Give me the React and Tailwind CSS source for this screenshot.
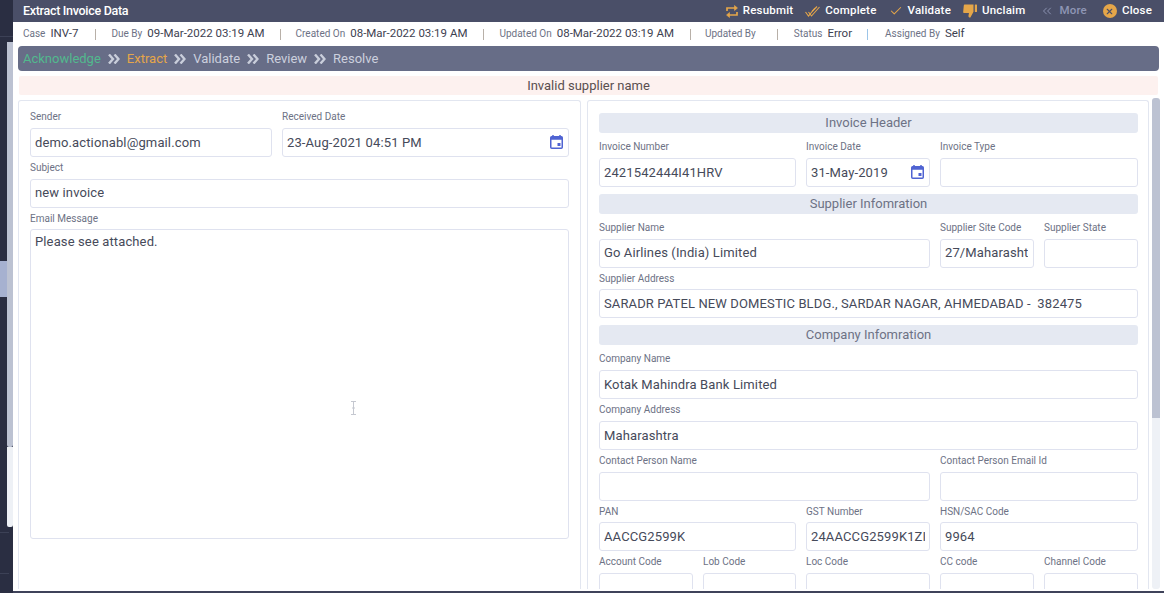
import { Check, ChevronsLeft, X } from 'lucide-react';

const DateIcon = () => (
  <svg width="13" height="14" viewBox="0 0 13 14" className="shrink-0 mr-[1px]">
    <path d="M3 0v2M10 0v2" stroke="#4f63d2" strokeWidth="1.5" />
    <rect x="0.75" y="1.75" width="11.5" height="11.5" rx="1" fill="none" stroke="#4f63d2" strokeWidth="1.5" />
    <rect x="0.75" y="1.75" width="11.5" height="3" fill="#4f63d2" />
    <rect x="7.5" y="8" width="3" height="3" fill="#4f63d2" />
  </svg>
);

const ResubmitIcon = () => (
  <svg width="12" height="13" viewBox="0 0 12 13" fill="none" stroke="#e5a649" strokeWidth="1.7">
    <path d="M1 6V3h9" />
    <path d="M8.5 0.5 11.5 3 8.5 5.5z" fill="#e5a649" strokeWidth="0.6" />
    <path d="M11 7v3H2" />
    <path d="M3.5 7.5 0.5 10 3.5 12.5z" fill="#e5a649" strokeWidth="0.6" />
  </svg>
);

const DoubleCheckIcon = () => (
  <svg width="15" height="11" viewBox="0 0 15 11" fill="none" stroke="#e5a649" strokeWidth="1.1">
    <path d="M0.5 6 3.5 10 10 2" />
    <path d="M3.5 6 6.5 10 14.5 1" />
    <path d="M7 5.5 12 0.5" />
  </svg>
);

const ThumbIcon = () => (
  <svg width="14" height="14" viewBox="0 0 14 14" fill="#e5a649">
    <path d="M1.6 0.5H10.5V7.8L7.4 13.5C6 13.7 5.2 12.8 5.5 11.5L6 9H1.5C0.5 9 0 8.3 0.2 7.4L0.8 1.4C0.9 0.8 1.1 0.5 1.6 0.5Z" />
    <rect x="11.8" y="0.5" width="2.2" height="7.5" rx="0.5" />
  </svg>
);

const Field = ({ label, value, icon, className = '' }) => (
  <div className={`min-w-0 ${className}`}>
    <div className="h-[21.75px] pt-[5px] text-[10px] leading-[12px] text-[#6d7285] whitespace-nowrap">{label}</div>
    <div className="h-[29px] border border-[#dfe2ef] rounded-[3px] bg-white flex items-center justify-between px-[4px] text-[13px] text-[#464a5a]">
      <span className="tracking-[0.125px] whitespace-pre overflow-hidden">{value}</span>
      {icon && <DateIcon />}
    </div>
  </div>
);

const SectionTitle = ({ children }) => (
  <div className="h-[20px] mt-[7px] mb-[3px] rounded-[3px] bg-[#e5e9f2] text-center text-[13px] leading-[20px] text-[#6d7285]">
    {children}
  </div>
);

const Meta = ({ label, value, className = '' }) => (
  <div className={`flex items-center ${className}`}>
    <span className="text-[10px] text-[#6d7285] pb-[1px]">{label}</span>
    {value && <span className="ml-[5px] text-[11.5px] text-[#3d4150]">{value}</span>}
  </div>
);

const Sep = ({ color = 'bg-[#b8b0a8]', className = '' }) => <div className={`w-px h-[11px] shrink-0 ${color} ${className}`} />;

const Action = ({ icon, label, muted, className = '' }) => (
  <div className={`flex items-center gap-[5px] ${className}`}>
    {icon}
    <span className={`text-[11.5px] font-medium tracking-[0.2px] ${muted ? 'text-[#8f96b5]' : 'text-white'}`}>{label}</span>
  </div>
);

const Step = ({ children, color }) => <span className={`text-[13px] ${color}`}>{children}</span>;

const Arrow = () => (
  <svg width="12" height="10" viewBox="0 0 12 10" fill="none" stroke="#c9cedb" strokeWidth="2.4" className="mx-[7px]">
    <path d="M1 0.5 5 5 1 9.5" />
    <path d="M6.5 0.5 10.5 5 6.5 9.5" />
  </svg>
);

export default function App() {
  return (
    <div className="h-[593px] w-[1164px] overflow-hidden flex bg-white text-[#464a5a]" style={{ fontFamily: 'Roboto, sans-serif' }}>
      {/* page behind the dialog */}
      <div className="w-[13px] shrink-0 bg-[#2a2e42] flex flex-col">
        <div className="h-[37px] border-b border-[#3c4156]" />
        <div className="h-[5px]" />
        <div className="flex h-[485px]">
          <div className="w-[7px] flex flex-col">
            <div className="h-[219px]" />
            <div className="h-[36px] bg-[#a6b1d0]" />
          </div>
          <div className="w-[6px] flex flex-col">
            <div className="h-[405px] bg-[#bcc2d2] rounded-b-[2px]" />
            <div className="flex-1 bg-[#eef1f6] rounded-b-[2px]" />
          </div>
        </div>
        <div className="h-[6px] border-b border-[#3c4156] w-[9px]" />
        <div className="h-[41px] border-b border-[#3c4156] w-[9px]" />
      </div>

      {/* dialog */}
      <div className="flex-1 min-w-0 flex flex-col">
        <div className="h-[22px] shrink-0 bg-[#4a4f68] flex items-center pl-[10px] pr-[12px]">
          <span className="text-[12.5px] font-medium tracking-[-0.3px] text-white">Extract Invoice Data</span>
          <div className="ml-auto flex items-center">
            <Action icon={<ResubmitIcon />} label="Resubmit" />
            <Action icon={<DoubleCheckIcon />} label="Complete" className="ml-[12px]" />
            <Action icon={<Check size={14} strokeWidth={1.8} className="text-[#e5a649]" />} label="Validate" className="ml-[12px]" />
            <Action icon={<ThumbIcon />} label="Unclaim" className="ml-[12px]" />
            <Action icon={<ChevronsLeft size={14} strokeWidth={1.6} className="text-[#8f96b5]" />} label="More" muted className="ml-[15px]" />
            <Action
              icon={
                <span className="w-[14px] h-[14px] rounded-full bg-[#e5a649] flex items-center justify-center">
                  <X size={9} strokeWidth={3} className="text-[#4a4f68]" />
                </span>
              }
              label="Close"
              className="ml-[16px]"
            />
          </div>
        </div>

        <div className="h-[24px] shrink-0 flex items-center pl-[10px]">
          <Meta label="Case" value="INV-7" />
          <Sep className="ml-[16px]" />
          <Meta label="Due By" value="09-Mar-2022 03:19 AM" className="ml-[16px]" />
          <Sep className="ml-[15px]" />
          <Meta label="Created On" value="08-Mar-2022 03:19 AM" className="ml-[15px]" />
          <Sep className="ml-[16px]" />
          <Meta label="Updated On" value="08-Mar-2022 03:19 AM" className="ml-[15px]" />
          <Sep className="ml-[16px]" />
          <Meta label="Updated By" className="ml-[14px]" />
          <Sep className="ml-[21px]" />
          <Meta label="Status" value="Error" className="ml-[16px]" />
          <Sep color="bg-[#9cc5e8]" className="ml-[15px]" />
          <Meta label="Assigned By" value="Self" className="ml-[17px]" />
        </div>

        <div className="h-[25px] shrink-0 mx-[5px] bg-[#676d87] rounded-[4px] flex items-center pl-[5px]">
          <Step color="text-[#52b98e]">Acknowledge</Step>
          <Arrow />
          <Step color="text-[#e5a649]">Extract</Step>
          <Arrow />
          <Step color="text-[#ccd0de]">Validate</Step>
          <Arrow />
          <Step color="text-[#ccd0de]">Review</Step>
          <Arrow />
          <Step color="text-[#ccd0de]">Resolve</Step>
        </div>

        <div className="h-[19px] shrink-0 mt-[5px] mx-[6px] bg-[#fdf1ef] rounded-[2px] text-center text-[13px] leading-[19px] text-[#5a4f4f]">
          Invalid supplier name
        </div>

        <div className="flex-1 min-h-0 flex pt-[5px] pb-[2px] pl-[5px] border-b-2 border-[#3f435a]">
          {/* left panel */}
          <div className="w-[563px] shrink-0 border border-b-0 border-[#e2e6f0] rounded-t-[3px] px-[11px] pt-[5px]">
            <div className="grid grid-cols-[242px_287px] gap-x-[10px]">
              <Field label="Sender" value="demo.actionabl@gmail.com" />
              <Field label="Received Date" value="23-Aug-2021 04:51 PM" icon />
            </div>
            <Field label="Subject" value="new invoice" />
            <div className="h-[21.75px] pt-[5px] text-[10px] leading-[12px] text-[#6d7285]">Email Message</div>
            <div className="relative h-[310px] border border-[#dfe2ef] rounded-[3px] pl-[4px] pt-[2px] text-[13px] tracking-[0.125px]">
              Please see attached.
              {/* mouse cursor */}
              <svg width="7" height="14" viewBox="0 0 7 14" className="absolute left-[319px] top-[171px]">
                <path d="M1 0.5h5M3.5 0.5v13M1 13.5h5M2 7h3" stroke="#c5c8d0" strokeWidth="1" fill="none" />
              </svg>
            </div>
          </div>

          {/* right panel */}
          <div className="w-[562px] shrink-0 ml-[6px] border border-b-0 border-[#e2e6f0] rounded-t-[3px] pl-[11px] pr-[10px] pt-[5px] overflow-hidden">
            <SectionTitle>Invoice Header</SectionTitle>
            <div className="grid grid-cols-[94px_93px_124px_94px_94px] gap-x-[10px]">
              <Field label="Invoice Number" value="2421542444I41HRV" className="col-span-2" />
              <Field label="Invoice Date" value="31-May-2019" icon />
              <Field label="Invoice Type" value="" className="col-span-2" />
            </div>
            <SectionTitle>Supplier Infomration</SectionTitle>
            <div className="grid grid-cols-[94px_93px_124px_94px_94px] gap-x-[10px]">
              <Field label="Supplier Name" value="Go Airlines (India) Limited" className="col-span-3" />
              <Field label="Supplier Site Code" value="27/Maharasht" />
              <Field label="Supplier State" value="" />
              <Field label="Supplier Address" value="SARADR PATEL NEW DOMESTIC BLDG., SARDAR NAGAR, AHMEDABAD -  382475" className="col-span-5" />
            </div>
            <SectionTitle>Company Infomration</SectionTitle>
            <div className="grid grid-cols-[94px_93px_124px_94px_94px] gap-x-[10px]">
              <Field label="Company Name" value="Kotak Mahindra Bank Limited" className="col-span-5" />
              <Field label="Company Address" value="Maharashtra" className="col-span-5" />
              <Field label="Contact Person Name" value="" className="col-span-3" />
              <Field label="Contact Person Email Id" value="" className="col-span-2" />
              <Field label="PAN" value="AACCG2599K" className="col-span-2" />
              <Field label="GST Number" value="24AACCG2599K1ZI" />
              <Field label="HSN/SAC Code" value="9964" className="col-span-2" />
              <Field label="Account Code" value="" />
              <Field label="Lob Code" value="" />
              <Field label="Loc Code" value="" />
              <Field label="CC code" value="" />
              <Field label="Channel Code" value="" />
            </div>
          </div>

          {/* scrollbar */}
          <div className="w-[8px] shrink-0 ml-[3px] -mt-[2px] flex flex-col rounded-[3px] overflow-hidden">
            <div className="h-[320px] bg-[#bcc2d2]" />
            <div className="flex-1 bg-[#eef1f6]" />
          </div>
        </div>
      </div>
    </div>
  );
}
